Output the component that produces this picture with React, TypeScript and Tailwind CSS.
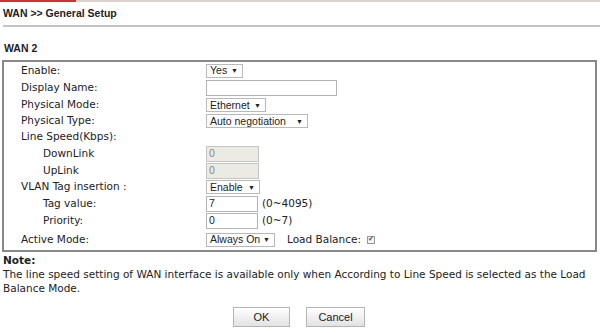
import type { ReactNode } from "react";

const sans = "font-['DejaVu_Sans',Verdana,sans-serif]";
const arial = "font-['Liberation_Sans',Arial,sans-serif]";

function Select({ value, width }: { value: string; width: string }) {
    return (
        <div className={`flex h-[14px] items-center justify-between border border-[#b9b9b9] bg-white pl-[3px] pr-[4px] text-[10.5px] leading-none text-[#222] ${arial} ${width}`}>
            <span>{value}</span>
            <span className="text-[7px]">▼</span>
        </div>
    );
}

function Input({ value = "", width, disabled = false }: { value?: string; width: string; disabled?: boolean }) {
    return (
        <div className={`flex h-[16px] items-center border pl-[2px] text-[10.5px] leading-none ${arial} ${width} ${disabled ? "border-[#c4c4c4] bg-[#ebebe4] text-[#888]" : "border-[#b4b4b4] bg-white text-[#222]"}`}>
            {value}
        </div>
    );
}

function Row({ label, h, indent = false, children }: { label: string; h: string; indent?: boolean; children?: ReactNode }) {
    return (
        <div className={`flex items-center ${h}`}>
            <div className={`w-[202px] shrink-0 ${indent ? "pl-[39px]" : "pl-[17px]"}`}>{label}</div>
            <div className="flex items-center">{children}</div>
        </div>
    );
}

export default function App() {
    return (
        <div className="h-[333px] w-[600px] overflow-hidden bg-white text-[#222]">
            <div className="flex h-[2px]">
                <div className="w-[76px] bg-[#c9343a]" />
                <div className="flex-1 bg-[#dcd0cf]" />
            </div>
            <div className={`flex h-[23px] items-center pl-[3px] text-[10.5px] font-bold ${arial}`}>WAN &gt;&gt; General Setup</div>
            <div className="ml-[3px] h-[2px] bg-[#c4c4c4]" />

            <div className={`flex h-[33px] items-end pb-[3px] pl-[4px] text-[10.5px] font-bold ${arial}`}>WAN 2</div>

            <div className={`mx-[2px] w-[595px] border-2 border-[#888] text-[10.5px] ${sans}`}>
                <Row label="Enable:" h="h-[17px]">
                    <Select value="Yes" width="w-[37px]" />
                </Row>
                <Row label="Display Name:" h="h-[18px]">
                    <Input width="w-[131px]" />
                </Row>
                <Row label="Physical Mode:" h="h-[16px]">
                    <Select value="Ethernet" width="w-[60px]" />
                </Row>
                <Row label="Physical Type:" h="h-[16px]">
                    <Select value="Auto negotiation" width="w-[102px]" />
                </Row>
                <Row label="Line Speed(Kbps):" h="h-[16px]" />
                <Row label="DownLink" h="h-[17px]" indent>
                    <Input value="0" width="w-[53px]" disabled />
                </Row>
                <Row label="UpLink" h="h-[17px]" indent>
                    <Input value="0" width="w-[53px]" disabled />
                </Row>
                <Row label="VLAN Tag insertion :" h="h-[16px]">
                    <Select value="Enable" width="w-[54px]" />
                </Row>
                <Row label="Tag value:" h="h-[17px]" indent>
                    <Input value="7" width="w-[52px]" />
                    <span className="ml-[4px]">(0~4095)</span>
                </Row>
                <Row label="Priority:" h="h-[17px]" indent>
                    <Input value="0" width="w-[52px]" />
                    <span className="ml-[4px]">(0~7)</span>
                </Row>
                <Row label="Active Mode:" h="h-[21px]">
                    <Select value="Always On" width="w-[69px]" />
                    <span className="ml-[12px]">Load Balance:</span>
                    <span className="ml-[6px] flex h-[8px] w-[8px] items-center justify-center border border-[#9a9a9a] bg-[#f3f3f3] text-[7px] leading-none text-[#555]">✔</span>
                </Row>
            </div>

            <div className={`px-[3px] pt-[1px] text-[10.5px] leading-[14px] ${sans}`}>
                <div className="font-bold">Note:</div>
                <div>The line speed setting of WAN interface is available only when According to Line Speed is selected as the Load Balance Mode.</div>
            </div>

            <div className={`mt-[12px] flex justify-center gap-[16px] pr-[2px] text-[11px] ${arial}`}>
                <button className="h-[20px] w-[57px] border border-[#b4b4b4] bg-gradient-to-b from-white to-[#e2e2e2] text-[#222]">OK</button>
                <button className="h-[20px] w-[59px] border border-[#b4b4b4] bg-gradient-to-b from-white to-[#e2e2e2] text-[#222]">Cancel</button>
            </div>
        </div>
    );
}
